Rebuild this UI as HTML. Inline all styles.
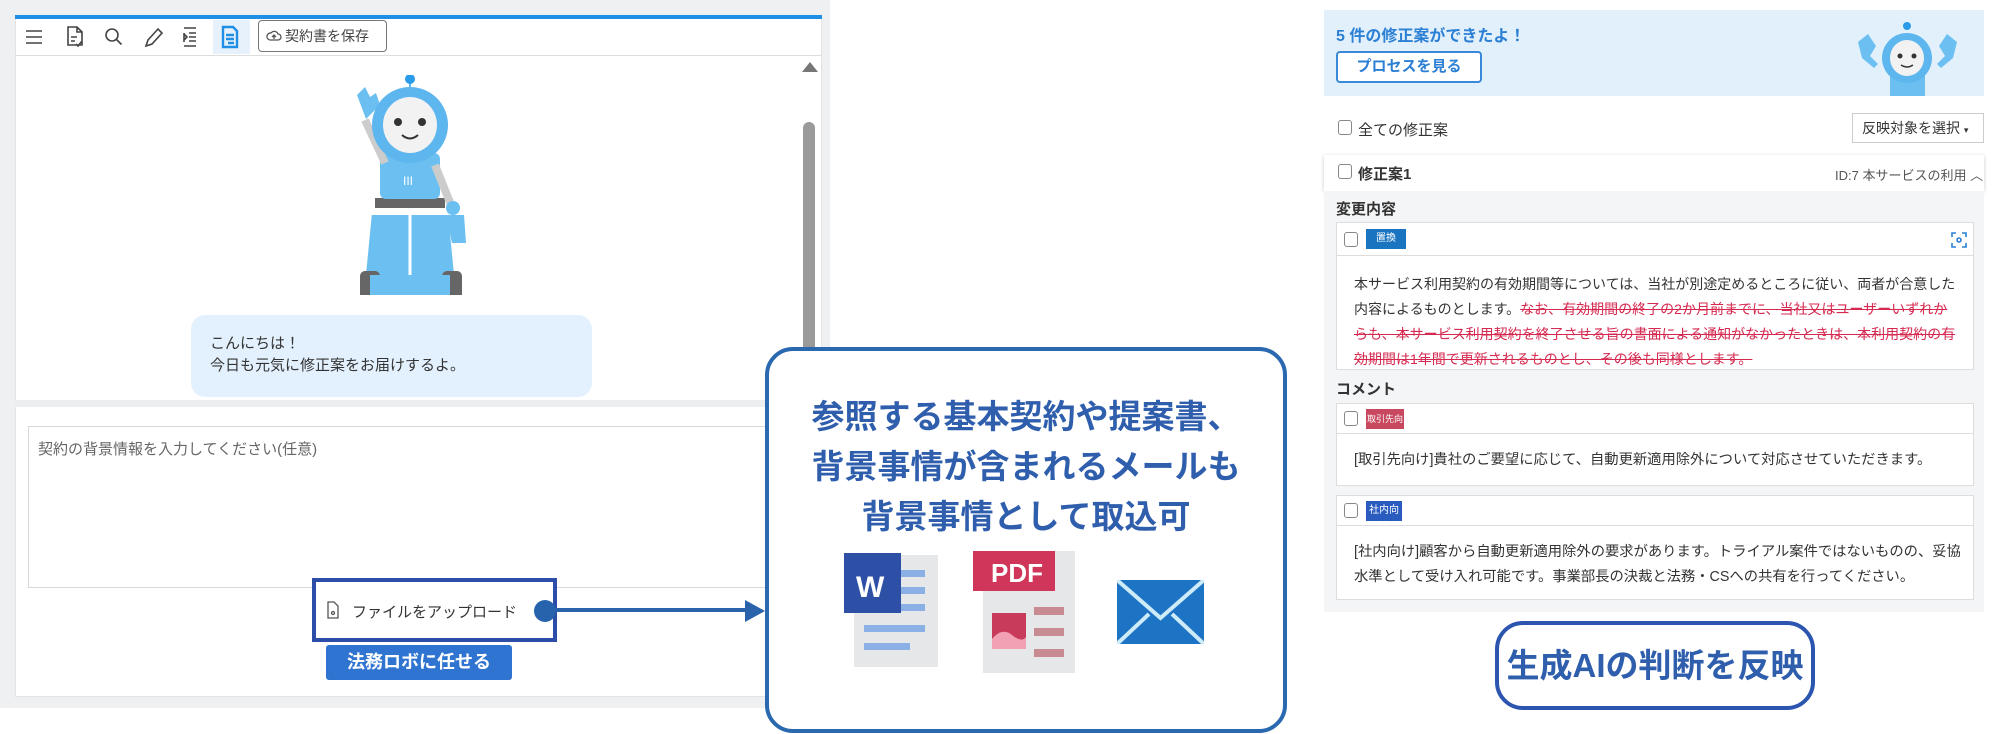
<!DOCTYPE html>
<html><head><meta charset="utf-8">
<style>
*{box-sizing:border-box;margin:0;padding:0}
body{width:2000px;height:734px;position:relative;background:#fff;font-family:"Liberation Sans","Noto Sans CJK JP",sans-serif;color:#333;overflow:hidden}
.a{position:absolute}
.cb{position:absolute;width:14px;height:15px;border:1.5px solid #888;border-radius:3px;background:#fff}
.t16{font-size:15px;white-space:nowrap}
</style></head><body>
<div class="a" style="left:0;top:0;width:830px;height:708px;background:#eff0f2"></div>
<div class="a" style="left:15px;top:15px;width:807px;height:682px;background:#fff;border:1px solid #e3e3e3"></div>
<div class="a" style="left:15px;top:15px;width:807px;height:4px;background:#1f8fe6"></div>
<div class="a" style="left:15px;top:55px;width:807px;height:1px;background:#ddd"></div>
<svg class="a" style="left:20px;top:20px" width="240" height="34" viewBox="0 0 240 34" fill="none" stroke="#444" stroke-width="1.6">
<path d="M6 11h16M6 17h16M6 23h16"/>
<path d="M48 7h9l5 5v13h-14z M57 7v5h5 M51 17h6 M51 21h4 M56 24l2 2 4-5"/>
<circle cx="92" cy="15" r="6"/><path d="M96.5 19.5l5 5"/>
<path d="M126 26l2-6 10-11 4 4-10 11z"/>
<path d="M164 8h12M169 13h7M169 17h7M169 21h7M164 26h12M164 13v9M164 14l3 3-3 3"/>
<rect x="193" y="0" width="37" height="34" fill="#e6f1fb" stroke="none"/>
<path d="M203 7h10l4 4v16h-14z M206 15h8M206 19h8 M208 23h6" stroke="#1f8fe6" stroke-width="2.4"/>
</svg>
<div class="a" style="left:258px;top:20px;width:129px;height:32px;border:1px solid #777;border-radius:4px;font-size:14px;line-height:30px;padding-left:26px;color:#444">契約書を保存</div>
<svg class="a" style="left:266px;top:29px" width="16" height="14" fill="none" stroke="#555" stroke-width="1.3"><path d="M4 11h8a3 3 0 0 0 0-6 4 4 0 0 0-7-1 3 3 0 0 0-1 7z M8 10V6M6 8l2-2 2 2"/></svg>
<div class="a" style="left:802px;top:62px;width:0;height:0;border-left:8px solid transparent;border-right:8px solid transparent;border-bottom:10px solid #777"></div>
<div class="a" style="left:803px;top:122px;width:12px;height:230px;background:#9a9a9a;border-radius:6px"></div>
<svg class="a" style="left:320px;top:75px" width="180" height="220" viewBox="0 0 180 220">
<rect x="55" y="123" width="70" height="10" fill="#666"/>
<path d="M52 138h76l8 82H44z" fill="#6cc0f1"/>
<path d="M90 140v72" stroke="#fff" stroke-width="3"/>
<path d="M52 138h76" stroke="#fff" stroke-width="4"/>
<rect x="60" y="78" width="60" height="46" rx="6" fill="#6cc0f1"/>
<text x="83" y="110" fill="#fff" font-size="12">III</text>
<path d="M65 88L45 45" stroke="#ccc" stroke-width="8"/>
<path d="M37 20l8-8 5 10 6-4 4 12-14 14z" fill="#6cc0f1"/>
<path d="M115 90l18 45" stroke="#ccc" stroke-width="8"/>
<circle cx="133" cy="133" r="7" fill="#6cc0f1"/>
<path d="M126 140h18l2 28h-14z" fill="#6cc0f1"/>
<rect x="40" y="196" width="20" height="30" rx="5" fill="#666"/><rect x="122" y="196" width="20" height="30" rx="5" fill="#666"/>
<rect x="50" y="200" width="80" height="20" fill="#6cc0f1"/>
<circle cx="90" cy="50" r="38" fill="#5db6ee"/>
<ellipse cx="90" cy="50" rx="27" ry="28" fill="#f2f2f2"/>
<circle cx="78" cy="47" r="4" fill="#333"/><circle cx="102" cy="47" r="4" fill="#333"/>
<path d="M82 60q8 7 16 0" stroke="#333" stroke-width="2" fill="none"/>
<path d="M90 12V5" stroke="#5db6ee" stroke-width="2"/><circle cx="90" cy="4" r="5" fill="#2a9be8"/>
</svg>
<div class="a" style="left:191px;top:315px;width:401px;height:82px;background:#e3f0fd;border-radius:14px"></div>
<div class="a t16" style="left:210px;top:333px;line-height:22px;color:#333">こんにちは！<br>今日も元気に修正案をお届けするよ。</div>
<div class="a" style="left:15px;top:400px;width:807px;height:7px;background:#eceef0"></div>
<div class="a" style="left:28px;top:426px;width:800px;height:162px;border:1px solid #d8d8d8;background:#fff"></div>
<div class="a t16" style="left:38px;top:438px;color:#666">契約の背景情報を入力してください(任意)</div>
<div class="a" style="left:312px;top:578px;width:245px;height:64px;border:4px solid #2d4ea8;background:#fff"></div>
<svg class="a" style="left:326px;top:600px" width="14" height="20" fill="none" stroke="#555" stroke-width="1.3"><path d="M2 2h6l4 4v12H2z"/><circle cx="7" cy="13" r="1.5"/></svg>
<div class="a t16" style="left:352px;top:601px;color:#333">ファイルをアップロード</div>
<div class="a" style="left:534px;top:600px;width:22px;height:22px;border-radius:50%;background:#2763ad"></div>
<svg class="a" style="left:555px;top:598px" width="215" height="28"><path d="M0 12H192" stroke="#2a62ac" stroke-width="4"/><path d="M190 2l20 11-20 11z" fill="#2a62ac"/></svg>
<div class="a" style="left:326px;top:645px;width:186px;height:35px;background:#2f74d0;border-radius:3px;color:#fff;font-weight:bold;font-size:18px;text-align:center;line-height:35px">法務ロボに任せる</div>
<div class="a" style="left:765px;top:347px;width:522px;height:386px;border:4px solid #2a68b0;border-radius:28px;background:#fff"></div>
<div class="a" style="left:765px;top:392px;width:522px;text-align:center;font-size:33px;font-weight:bold;color:#2f5ead;line-height:50px">参照する基本契約や提案書、<br>背景事情が含まれるメールも<br>背景事情として取込可</div>
<svg class="a" style="left:844px;top:553px" width="100" height="115">
<rect x="10" y="2" width="84" height="112" fill="#e6e7e9"/>
<rect x="0" y="0" width="57" height="60" fill="#2d4fa6"/>
<text x="12" y="44" fill="#fff" font-size="30" font-weight="bold" font-family="Liberation Sans">W</text>
<g fill="#8ab0e6"><rect x="57" y="17" width="24" height="7"/><rect x="57" y="34" width="24" height="7"/><rect x="57" y="51" width="24" height="7"/><rect x="20" y="72" width="61" height="7"/><rect x="20" y="90" width="46" height="7"/></g>
</svg>
<svg class="a" style="left:973px;top:551px" width="108" height="122">
<rect x="10" y="0" width="92" height="122" fill="#e6e7e9"/>
<rect x="0" y="0" width="82" height="40" fill="#d0365a"/>
<text x="18" y="31" fill="#fff" font-size="26" font-weight="bold" font-family="Liberation Sans">PDF</text>
<rect x="19" y="62" width="34" height="36" fill="#c93b5b"/>
<path d="M19 88q10-12 20-4t14 2v12H19z" fill="#f2a0b4"/>
<g fill="#c98b92"><rect x="61" y="56" width="30" height="8"/><rect x="61" y="77" width="30" height="8"/><rect x="61" y="98" width="30" height="8"/></g>
</svg>
<svg class="a" style="left:1117px;top:580px" width="87" height="64">
<rect x="0" y="0" width="87" height="64" fill="#1d73c4"/>
<path d="M0 0l43.5 38L87 0M0 64l32-30M87 64L55 34" stroke="#cdebf9" stroke-width="4" fill="none"/>
</svg>
<div class="a" style="left:1324px;top:10px;width:660px;height:86px;background:#e2f0fc"></div>
<div class="a" style="left:1336px;top:22px;font-size:16px;font-weight:bold;color:#2b7fd4;white-space:nowrap">5 件の修正案ができたよ！</div>
<div class="a" style="left:1336px;top:51px;width:146px;height:32px;border:2px solid #3a88d8;border-radius:4px;background:#fff;color:#2b7fd4;font-weight:bold;font-size:15px;text-align:center;line-height:28px">プロセスを見る</div>
<svg class="a" style="left:1850px;top:20px" width="115" height="76" viewBox="0 0 115 76">
<path d="M8 22l10-8 8 12-6 10 8 8-4 4-12-10z M107 22l-10-8-8 12 6 10-8 8 4 4 12-10z" fill="#6cc0f1"/>
<rect x="40" y="50" width="35" height="26" fill="#6cc0f1"/>
<circle cx="57" cy="38" r="25" fill="#5db6ee"/><ellipse cx="57" cy="38" rx="17" ry="18" fill="#f2f2f2"/>
<circle cx="50" cy="36" r="2.5" fill="#333"/><circle cx="64" cy="36" r="2.5" fill="#333"/>
<path d="M51 45q6 4 12 0" stroke="#333" stroke-width="1.5" fill="none"/><circle cx="57" cy="6" r="4" fill="#2a9be8"/>
</svg>
<div class="cb" style="left:1338px;top:120px"></div>
<div class="a t16" style="left:1358px;top:119px">全ての修正案</div>
<div class="a" style="left:1852px;top:113px;width:132px;height:30px;border:1px solid #ccc;font-size:14px;line-height:28px;padding-left:9px;white-space:nowrap">反映対象を選択 <span style="font-size:9px">▾</span></div>
<div class="a" style="left:1324px;top:155px;width:660px;height:36px;background:#fff;box-shadow:0 1px 4px rgba(0,0,0,.2)"></div>
<div class="cb" style="left:1338px;top:164px"></div>
<div class="a t16" style="left:1358px;top:163px;font-weight:bold">修正案1</div>
<div class="a" style="left:1835px;top:165px;font-size:13px;color:#555;white-space:nowrap">ID:7 本サービスの利用 ︿</div>
<div class="a" style="left:1324px;top:191px;width:660px;height:421px;background:#f4f5f6"></div>
<div class="a t16" style="left:1336px;top:198px;font-weight:bold">変更内容</div>
<div class="a" style="left:1336px;top:222px;width:638px;height:148px;background:#fff;border:1px solid #ddd"></div>
<div class="a" style="left:1336px;top:255px;width:638px;height:1px;background:#ddd"></div>
<div class="cb" style="left:1344px;top:232px"></div>
<div class="a" style="left:1366px;top:229px;width:40px;height:20px;background:#1a74c0;color:#fff;font-size:10px;text-align:center;line-height:20px">置換</div>
<svg class="a" style="left:1951px;top:232px" width="16" height="16" fill="none" stroke="#2b7fd4" stroke-width="1.6"><path d="M1 5V1h4M11 1h4v4M15 11v4h-4M5 15H1v-4"/><circle cx="8" cy="8" r="2"/></svg>
<div class="a" style="left:1354px;top:272px;width:606px;font-size:14px;line-height:25px;color:#333">本サービス利用契約の有効期間等については、当社が別途定めるところに従い、両者が合意した内容によるものとします。<span style="color:#d5294f;text-decoration:line-through">なお、有効期間の終了の2か月前までに、当社又はユーザーいずれからも、本サービス利用契約を終了させる旨の書面による通知がなかったときは、本利用契約の有効期間は1年間で更新されるものとし、その後も同様とします。</span></div>
<div class="a t16" style="left:1336px;top:378px;font-weight:bold">コメント</div>
<div class="a" style="left:1336px;top:403px;width:638px;height:83px;background:#fff;border:1px solid #ddd"></div>
<div class="a" style="left:1336px;top:433px;width:638px;height:1px;background:#ddd"></div>
<div class="cb" style="left:1344px;top:411px"></div>
<div class="a" style="left:1366px;top:409px;width:38px;height:20px;background:#c8485f;color:#fff;font-size:9px;text-align:center;line-height:20px">取引先向け</div>
<div class="a" style="left:1354px;top:448px;font-size:14.3px;white-space:nowrap">[取引先向け]貴社のご要望に応じて、自動更新適用除外について対応させていただきます。</div>
<div class="a" style="left:1336px;top:495px;width:638px;height:105px;background:#fff;border:1px solid #ddd"></div>
<div class="a" style="left:1336px;top:525px;width:638px;height:1px;background:#ddd"></div>
<div class="cb" style="left:1344px;top:503px"></div>
<div class="a" style="left:1366px;top:501px;width:36px;height:20px;background:#2a5cc0;color:#fff;font-size:10px;text-align:center;line-height:20px">社内向け</div>
<div class="a" style="left:1354px;top:540px;width:614px;font-size:14.3px;line-height:25px">[社内向け]顧客から自動更新適用除外の要求があります。トライアル案件ではないものの、妥協水準として受け入れ可能です。事業部長の決裁と法務・CSへの共有を行ってください。</div>
<div class="a" style="left:1495px;top:621px;width:320px;height:89px;border:4px solid #2c55b0;border-radius:28px;background:#fff;color:#2f5ead;font-size:33px;font-weight:bold;text-align:center;line-height:81px">生成AIの判断を反映</div>
</body></html>
